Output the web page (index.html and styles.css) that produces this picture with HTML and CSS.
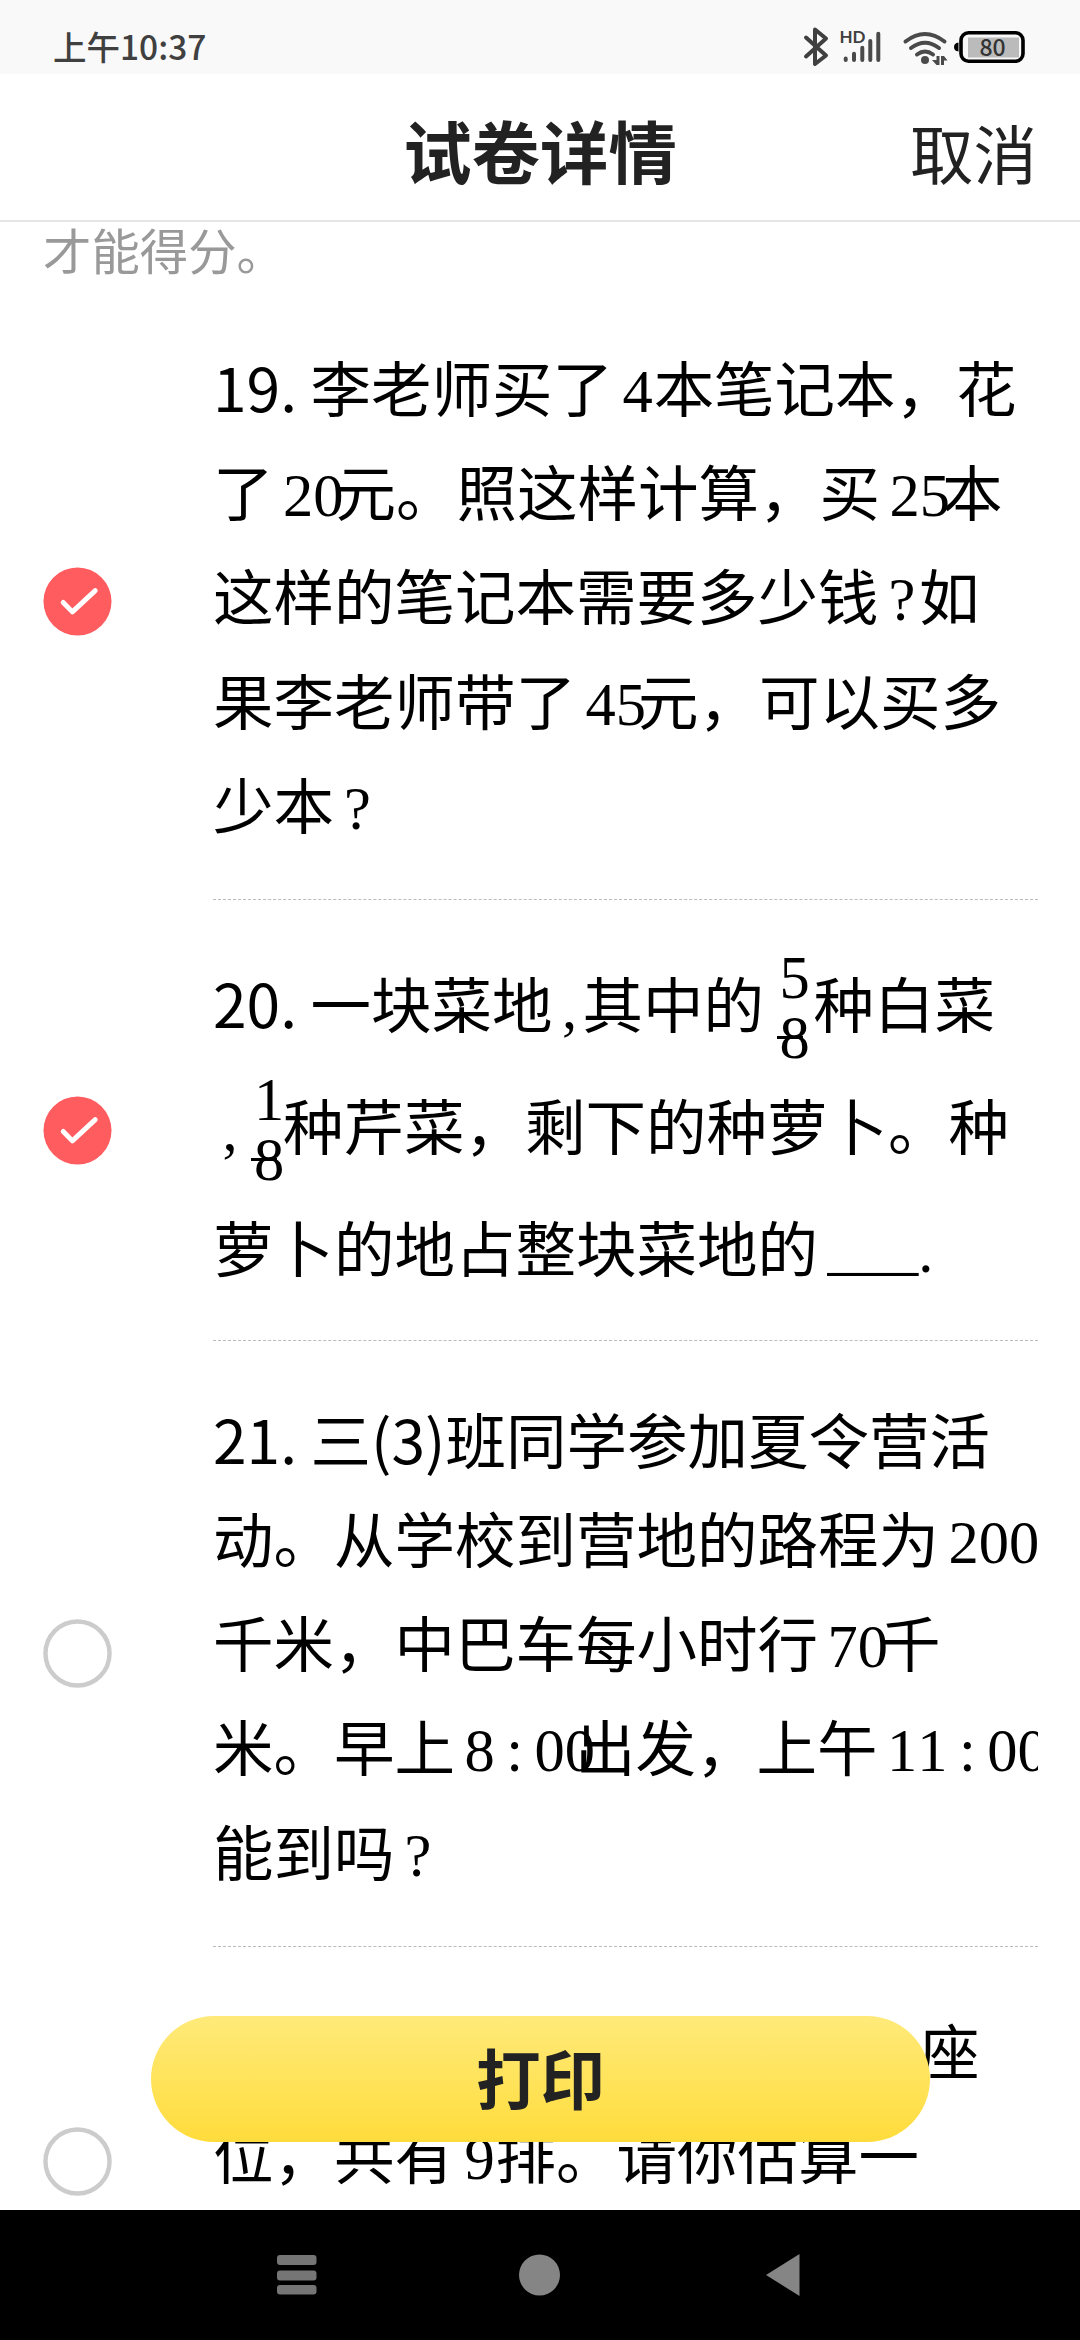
FILE: index.html
```html
<!DOCTYPE html>
<html lang="zh-CN">
<head>
    <meta charset="UTF-8">
    <meta name="viewport" content="width=device-width, initial-scale=1.0">
    <title>试卷详情</title>
    <link rel="stylesheet" href="styles.css">
</head>
<body>
    <div class="status-bar">
        <span class="clock">上午10:37</span>
        <svg class="status-icons" viewBox="800 0 230 74">
            <!-- bluetooth -->
            <path class="line" d="M806 37.500L826 55.500L815 64V29.500L826 38.500L806 56.500"/>
            <!-- signal -->
            <text class="hd" x="839.500" y="43">HD</text>
            <path class="bars" d="M845.700 58.500V60M854 53.700V60M862.300 47.700V60M870.300 41V60M878.300 33.700V60"/>
            <!-- wifi -->
            <path class="wifi" d="M905.500 41.500Q925 26.500 944.500 41.500M911 48Q925 37.500 939 48M917 54.500Q925 48.500 933 54.500"/>
            <circle class="solid" cx="925" cy="60" r="4"/>
            <path class="solid" d="M936.500 56V65H939.500V56ZM936.500 65L932 60H936.500ZM941 56V65H944V56ZM944 56L947.500 60.500H944Z"/>
            <!-- battery -->
            <path d="M958.500 42.500Q954 43 954 47T958.500 51.500Z"/>
            <rect class="battery" x="961" y="32.800" width="62" height="28.400" rx="7.500"/>
            <rect class="charge" x="968" y="37.500" width="51" height="20"/>
            <text class="percent" x="992.500" y="55.500">80</text>
        </svg>
    </div>

    <div class="header">
        <h1>试卷详情</h1>
        <span class="cancel">取消</span>
    </div>

    <div class="content">
        <p class="hint">才能得分。</p>

        <div class="item">
            <svg class="check checked" viewBox="0 0 70 70">
                <circle cx="35" cy="35" r="34.500"/>
                <path d="M20.500 36L29.800 45.500L53 24"/>
            </svg>
            <div class="question">
                <div class="row">19. 李老师买了<span class="math">4</span>本笔记本，花</div>
                <div class="row">了<span class="math two">20</span>元。照这样计算，买<span class="math two">25</span>本</div>
                <div class="row">这样的笔记本需要多少钱<span class="math mark">?</span>如</div>
                <div class="row">果李老师带了<span class="math two">45</span>元，可以买多</div>
                <div class="row">少本<span class="math mark">?</span></div>
            </div>
        </div>

        <div class="item">
            <svg class="check checked" viewBox="0 0 70 70">
                <circle cx="35" cy="35" r="34.500"/>
                <path d="M20.500 36L29.800 45.500L53 24"/>
            </svg>
            <div class="question tall">
                <div class="row">20. 一块菜地<span class="math comma">,</span>其中的<span class="frac"><span>5</span><span>8</span></span>种白菜</div>
                <div class="row"><span class="math comma">,</span><span class="frac tight"><span>1</span><span>8</span></span>种芹菜，剩下的种萝卜。种</div>
                <div class="row">萝卜的地占整块菜地的<span class="math blank"><span>___</span>.</span></div>
            </div>
        </div>

        <div class="item">
            <svg class="check" viewBox="0 0 70 70">
                <circle cx="35" cy="35" r="32.500"/>
            </svg>
            <div class="question">
                <div class="row first">21. 三(3)班同学参加夏令营活</div>
                <div class="row">动。从学校到营地的路程为<span class="math">200</span></div>
                <div class="row">千米，中巴车每小时行<span class="math two">70</span>千</div>
                <div class="row">米。早上<span class="math time">8<span>:</span>00</span>出发，上午<span class="math time">11<span>:</span>00</span></div>
                <div class="row">能到吗<span class="math mark">?</span></div>
            </div>
        </div>

        <div class="item">
            <svg class="check" viewBox="0 0 70 70">
                <circle cx="35" cy="35" r="32.500"/>
            </svg>
            <div class="question last">
                <div class="row end">座</div>
                <div class="row">位，共有<span class="math">9</span>排。请你估算一</div>
            </div>
        </div>
    </div>

    <button class="print">打印</button>

    <div class="nav-bar">
        <svg viewBox="0 0 44 44">
            <g class="menu">
                <rect x="2" y="2" width="39.500" height="10" rx="3"/>
                <rect x="2" y="17.500" width="39.500" height="10" rx="3"/>
                <rect x="2" y="32" width="39.500" height="9.500" rx="3"/>
            </g>
        </svg>
        <svg viewBox="0 0 44 44"><circle cx="21.500" cy="22" r="20.500"/></svg>
        <svg viewBox="0 0 44 44"><path d="M5 22L38.500 1V43Z"/></svg>
    </div>
</body>
</html>
```

FILE: styles.css
```css
* {
    box-sizing: border-box;
}

body {
    margin: 0;
    width: 1080px;
    height: 2340px;
    display: flex;
    flex-direction: column;
    overflow: hidden;
    position: relative;
    background-color: #fff;
    color: #000;
    font-family: "Noto Sans CJK SC", sans-serif;
}

.status-bar {
    flex: none;
    height: 74px;
    padding: 0 50px 0 53px;
    display: flex;
    justify-content: space-between;
    align-items: center;
    background-color: #f9f9f9;
    color: #404040;
}

.clock {
    font-size: 33.5px;
    font-weight: 500;
    line-height: 48px;
    padding-top: 18px;
}

.status-icons {
    width: 230px;
    height: 74px;
}

.status-icons .line,
.status-icons .bars,
.status-icons .wifi {
    fill: none;
    stroke: #4a4a4a;
    stroke-width: 4;
    stroke-linecap: round;
    stroke-linejoin: round;
}

.status-icons .line {
    stroke: #404040;
}

.status-icons .solid {
    fill: #4a4a4a;
}

.status-icons .hd {
    font: 700 17px Lato, sans-serif;
    fill: #404040;
}

.status-icons .battery {
    fill: #f9f9f9;
    stroke: #000;
    stroke-width: 3.6;
}

.status-icons .charge {
    fill: #bbb;
}

.status-icons .percent {
    font: 500 23px "Noto Sans CJK SC", sans-serif;
    fill: #333;
    text-anchor: middle;
}

.header {
    flex: none;
    height: 148px;
    padding: 0 43px;
    display: grid;
    grid-template-columns: 1fr auto 1fr;
    align-items: center;
    border-bottom: 2px solid #e6e6e6;
    color: #222;
}

.header h1 {
    grid-column: 2;
    margin: 0;
    padding-top: 5px;
    font-size: 68.4px;
    font-weight: 700;
    line-height: 90px;
}

.cancel {
    justify-self: end;
    padding-top: 8px;
    font-size: 63.5px;
    line-height: 90px;
}

.content {
    flex: 1;
    min-height: 0;
    padding: 0 42px 0 43px;
    overflow: hidden;
}

.hint {
    margin: 0;
    height: 72px;
    font-size: 48.4px;
    line-height: 54px;
    color: #999;
}

.item {
    display: flex;
    align-items: center;
    gap: 101px;
}

.check {
    flex: none;
    width: 69px;
    height: 69px;
}

.check circle {
    fill: none;
    stroke: #ccc;
    stroke-width: 4.5;
}

.checked circle {
    fill: #ff5c5f;
    stroke: none;
}

.checked path {
    fill: none;
    stroke: #fff;
    stroke-width: 5;
    stroke-linecap: round;
    stroke-linejoin: round;
}

.question {
    width: 826px;
    margin-bottom: 10px;
    padding: 40px 0 44px;
    border-bottom: 1px dashed #bbb;
    overflow: hidden;
    font-size: 60.5px;
}

.row {
    height: 104.2px;
    line-height: 104.2px;
    white-space: nowrap;
}

.row.first {
    height: 94px;
    line-height: 94px;
}

.row.end {
    padding-left: 706px;
}

.tall {
    padding: 31px 0 33px;
}

.tall .row {
    height: 122px;
    line-height: 122px;
}

.last {
    height: 399px;
}

/* formula fragments, narrower than the text they hold */
.math {
    display: inline-block;
    width: 40.6px;
    padding-left: 9.5px;
    font-family: "Liberation Serif", serif;
    font-kerning: none;
    line-height: 1;
}

.math.two {
    width: 62px;
}

.math.mark {
    padding-left: 10px;
}

.math.comma {
    width: 30px;
}

.math.time {
    width: 120px;
}

.time span {
    margin: 0 11.5px;
}

.blank span {
    vertical-align: 4px;
}

.frac {
    display: inline-flex;
    flex-direction: column;
    position: relative;
    width: 49.5px;
    padding-left: 15.5px;
    font-family: "Liberation Serif", serif;
    line-height: 60.5px;
    vertical-align: 30px;
    height: 60.5px;
}

.frac.tight {
    width: 40px;
    padding-left: 11px;
}

.frac span {
    flex: none;
    height: 60.5px;
}

.frac::after {
    content: "";
    position: absolute;
    left: 12.5px;
    top: 88px;
    width: 26px;
    height: 3px;
    background-color: #000;
}

.frac.tight::after {
    left: 8px;
}

.print {
    position: absolute;
    left: 151px;
    bottom: 198px;
    width: 779px;
    height: 126px;
    padding: 0 0 5px;
    border: none;
    border-radius: 63px;
    background: linear-gradient(#ffea7a, #ffdc3c);
    color: #222;
    font-family: inherit;
    font-size: 64.5px;
    font-weight: 700;
    line-height: 1;
}

.nav-bar {
    flex: none;
    height: 130px;
    display: flex;
    justify-content: center;
    align-items: center;
    gap: 199px;
    background-color: #000;
    fill: #858585;
}

.nav-bar svg {
    width: 44px;
    height: 44px;
}

.nav-bar .menu {
    fill: #757575;
}
```
